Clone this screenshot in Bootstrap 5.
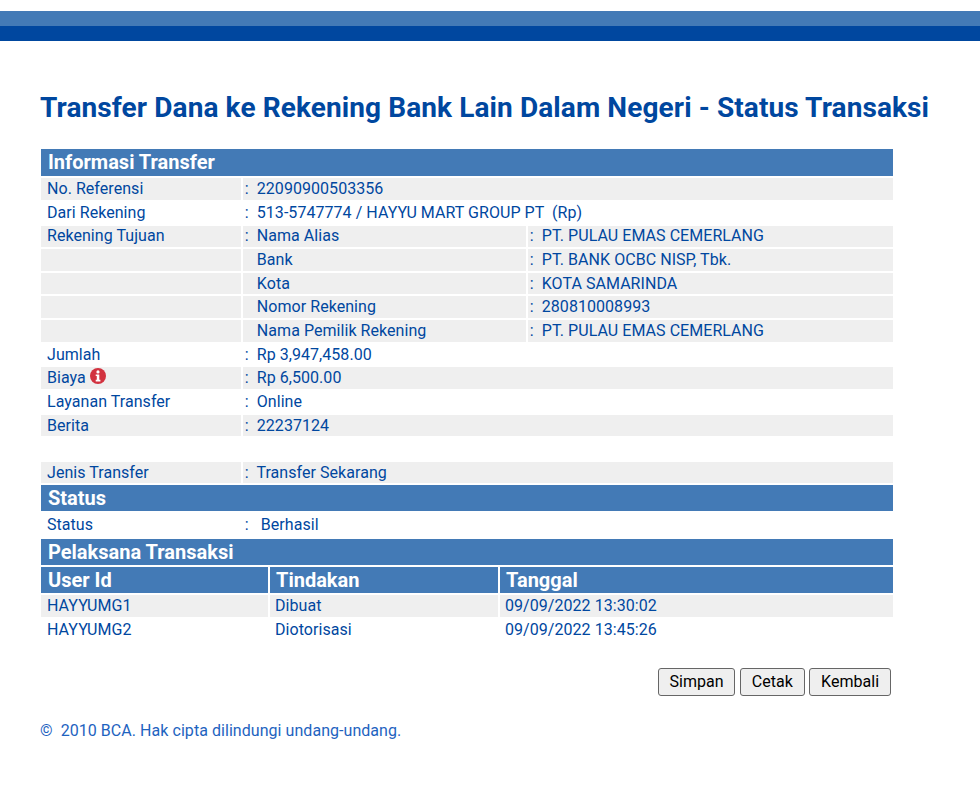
<!DOCTYPE html>
<html lang="id">
<head>
<meta charset="utf-8">
<title>Status Transaksi</title>
<link href="https://cdn.jsdelivr.net/npm/bootstrap@5.3.0/dist/css/bootstrap.min.css" rel="stylesheet">
<style>
body{font-family:Roboto,"Liberation Sans",sans-serif;font-size:16px;color:#00479f;background:#fff;line-height:18.75px;letter-spacing:.05px}
.bar-wrap{padding-top:11px}
.bar-light{height:15px;background:#437ab6}
.bar-dark{height:15px;background:#00479f}
.page{padding:0 40px;width:934px}
.page-title{font-size:28px;font-weight:700;letter-spacing:.105px;line-height:32px;color:#00479f;margin:51px 0 24px;white-space:nowrap}
.trx{width:854px;table-layout:fixed;border-collapse:separate;border-spacing:0}
.trx td,.trx th{border:1px solid #fff;padding:0 0 0 5px;height:23.67px;white-space:pre;vertical-align:middle;line-height:18px;font-weight:400}
.trx td:first-child{padding-left:6px}
.trx td.val{padding-left:1.8px}
.trx tr.shade td{background:#efefef}
.trx tr.row-short td{height:23px}
.trx tr.row-tall td{height:26px}
.trx th.head{background:#437ab6;color:#fff;font-size:20px;font-weight:700;letter-spacing:0;height:28px;padding-left:6px;padding-bottom:1px}
.trx th.head:first-child{padding-left:7px}
.trx th.head-top{height:29.2px}
.trx th.head-crew{height:28.4px}
.info-ico{width:16px;height:16px;vertical-align:2px;margin:-3px 0}
.act{padding-top:26.6px;padding-right:3px;gap:4.5px;width:854px}
.act .btn-act{font-family:Roboto,"Liberation Sans",sans-serif;font-size:16px;line-height:18.75px;letter-spacing:.05px;color:#000;background:#efefef;border:1px solid #666;border-radius:3px;padding:4px 10.8px 3px;height:28px}
.foot-note{color:#1e63bf;margin-top:26px;white-space:pre}
</style>
</head>
<body>
<div class="bar-wrap">
  <div class="bar-light"></div>
  <div class="bar-dark"></div>
</div>
<div class="page">
  <h1 class="page-title">Transfer Dana ke Rekening Bank Lain Dalam Negeri - Status Transaksi</h1>
  <table class="trx">
    <colgroup><col style="width:202px"><col style="width:285px"><col></colgroup>
    <tr><th class="head head-top" colspan="3">Informasi Transfer</th></tr>
    <tr class="shade"><td>No. Referensi</td><td class="val" colspan="2">:  22090900503356</td></tr>
    <tr><td>Dari Rekening</td><td class="val" colspan="2">:  513-5747774 / HAYYU MART GROUP PT  (Rp)</td></tr>
    <tr class="shade"><td>Rekening Tujuan</td><td class="val">:  Nama Alias</td><td class="val">:  PT. PULAU EMAS CEMERLANG</td></tr>
    <tr class="shade"><td></td><td class="val">   Bank</td><td class="val">:  PT. BANK OCBC NISP, Tbk.</td></tr>
    <tr class="shade"><td></td><td class="val">   Kota</td><td class="val">:  KOTA SAMARINDA</td></tr>
    <tr class="shade"><td></td><td class="val">   Nomor Rekening</td><td class="val">:  280810008993</td></tr>
    <tr class="shade"><td></td><td class="val">   Nama Pemilik Rekening</td><td class="val">:  PT. PULAU EMAS CEMERLANG</td></tr>
    <tr><td>Jumlah</td><td class="val" colspan="2">:  Rp 3,947,458.00</td></tr>
    <tr class="shade"><td>Biaya <svg class="info-ico" viewBox="0 0 16 16" aria-hidden="true"><circle cx="8" cy="8" r="8" fill="#d2323f"/><circle cx="8" cy="3.9" r="1.6" fill="#fff"/><path d="M5.7 6.4h3.6v5.3h1.1v1.7H5.7v-1.7h1.1V8.1H5.7z" fill="#fff"/></svg></td><td class="val" colspan="2">:  Rp 6,500.00</td></tr>
    <tr><td>Layanan Transfer</td><td class="val" colspan="2">:  Online</td></tr>
    <tr class="shade"><td>Berita</td><td class="val" colspan="2">:  22237124</td></tr>
    <tr><td colspan="3"></td></tr>
    <tr class="shade row-short"><td>Jenis Transfer</td><td class="val" colspan="2">:  Transfer Sekarang</td></tr>
    <tr><th class="head" colspan="3">Status</th></tr>
    <tr class="row-tall"><td>Status</td><td class="val" colspan="2">:   Berhasil</td></tr>
    <tr><th class="head" colspan="3">Pelaksana Transaksi</th></tr>
  </table>
  <table class="trx">
    <colgroup><col style="width:229px"><col style="width:230px"><col></colgroup>
    <tr><th class="head head-crew">User Id</th><th class="head head-crew">Tindakan</th><th class="head head-crew">Tanggal</th></tr>
    <tr class="shade"><td>HAYYUMG1</td><td>Dibuat</td><td>09/09/2022 13:30:02</td></tr>
    <tr><td>HAYYUMG2</td><td>Diotorisasi</td><td>09/09/2022 13:45:26</td></tr>
  </table>
  <div class="act d-flex justify-content-end">
    <button type="button" class="btn-act">Simpan</button>
    <button type="button" class="btn-act">Cetak</button>
    <button type="button" class="btn-act">Kembali</button>
  </div>
  <div class="foot-note">©  2010 BCA. Hak cipta dilindungi undang-undang.</div>
</div>
<script src="https://cdn.jsdelivr.net/npm/bootstrap@5.3.0/dist/js/bootstrap.bundle.min.js"></script>
</body>
</html>
